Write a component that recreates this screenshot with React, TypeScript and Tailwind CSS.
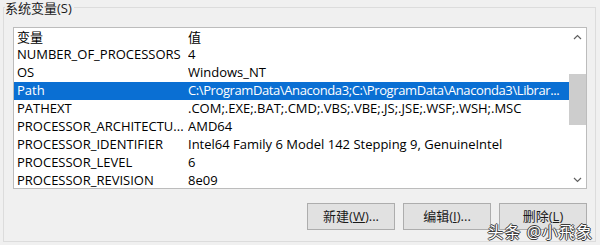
import React from 'react';

interface EnvVar {
  name: string;
  value: string;
  selected?: boolean;
}

const vars: EnvVar[] = [
  { name: 'NUMBER_OF_PROCESSORS', value: '4' },
  { name: 'OS', value: 'Windows_NT' },
  { name: 'Path', value: 'C:\\ProgramData\\Anaconda3;C:\\ProgramData\\Anaconda3\\Librar...', selected: true },
  { name: 'PATHEXT', value: '.COM;.EXE;.BAT;.CMD;.VBS;.VBE;.JS;.JSE;.WSF;.WSH;.MSC' },
  { name: 'PROCESSOR_ARCHITECTU...', value: 'AMD64' },
  { name: 'PROCESSOR_IDENTIFIER', value: 'Intel64 Family 6 Model 142 Stepping 9, GenuineIntel' },
  { name: 'PROCESSOR_LEVEL', value: '6' },
  { name: 'PROCESSOR_REVISION', value: '8e09' },
];

const font = "font-['Segoe_UI','Open_Sans','Noto_Sans_CJK_SC',sans-serif]";

const Chevron = ({ up }: { up?: boolean }) => (
  <svg width="9" height="6" viewBox="0 0 9 6" className={up ? '' : 'rotate-180'}>
    <path d="M1 5 L4.5 1.5 L8 5" fill="none" stroke="#606060" strokeWidth="1.2" />
  </svg>
);

const Button = ({ label, mnemonic, tail }: { label: string; mnemonic: string; tail?: string }) => (
  <button className="w-[88px] h-[27px] bg-[#e1e1e1] border border-[#adadad] text-[13px] text-[#1a1a1a] flex items-center justify-center">
    {label}(<u>{mnemonic}</u>){tail}
  </button>
);

export default function App() {
  return (
    <div className={`w-[600px] h-[245px] bg-[#f0f0f0] pt-[7px] pl-[3px] pr-[4px] pb-[3px] overflow-hidden ${font}`}>
      <div className="relative h-full border border-[#dcdcdc] pl-[9px] pr-[8px] pt-[19px]">
        {/* group label sits over the top border */}
        <span className="absolute left-[1px] -top-[8px] bg-[#f0f0f0] pr-[2px] text-[13px] leading-[17px] text-[#1a1a1a]">
          系统变量(S)
        </span>

        <div className="h-[162px] border border-[#bcbcbc] bg-white flex overflow-hidden">
          <div className="flex-1 min-w-0 overflow-hidden text-[13px] text-black">
            <div className="grid grid-cols-[174px_1fr] h-[18px] items-center">
              <span className="pl-[3px]">变量</span>
              <span>值</span>
            </div>
            {vars.map((v) => (
              <div
                key={v.name}
                className={`grid grid-cols-[174px_minmax(0,1fr)] h-[18px] items-center whitespace-nowrap ${
                  v.selected ? 'bg-[#0a6fd3] text-white' : ''
                }`}
              >
                <span className="pl-[3px] overflow-hidden">{v.name}</span>
                <span className={`overflow-hidden ${v.selected ? 'tracking-[-0.4px]' : ''}`}>{v.value}</span>
              </div>
            ))}
          </div>

          {/* scrollbar */}
          <div className="w-[17px] flex flex-col bg-white">
            <div className="h-[17px] flex items-center justify-center">
              <Chevron up />
            </div>
            <div className="flex-1">
              <div className="mt-[29px] h-[51px] bg-[#cdcdcd]" />
            </div>
            <div className="h-[17px] flex items-center justify-center">
              <Chevron />
            </div>
          </div>
        </div>

        <div className="mt-[14px] flex justify-end gap-[8px]">
          <Button label="新建" mnemonic="W" tail="..." />
          <Button label="编辑" mnemonic="I" tail="..." />
          <Button label="删除" mnemonic="L" />
        </div>

        {/* watermark */}
        <span className="absolute right-[2px] bottom-0 text-[16px] leading-[18px] tracking-[1px] text-white [text-shadow:1px_0_#3a3a3a,-1px_0_#3a3a3a,0_1px_#3a3a3a,0_-1px_#3a3a3a]">
          头条 @小飛象
        </span>
      </div>
    </div>
  );
}
